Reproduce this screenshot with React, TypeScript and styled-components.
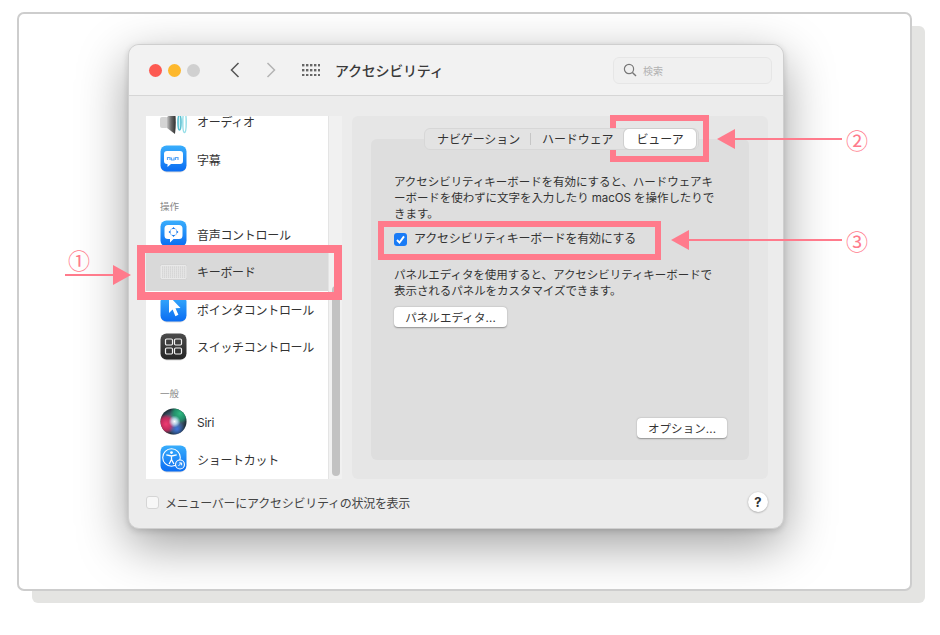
import React from "react";
import styled, { createGlobalStyle } from "styled-components";

const PINK = "#ff7b8c";
const FONT = `Inter, "Noto Sans CJK JP", sans-serif`;

const Global = createGlobalStyle`
  html, body { margin: 0; padding: 0; background: #fff; }
  body { font-family: ${FONT}; color: #333; }
  * { box-sizing: border-box; }
`;

const Page = styled.div`
  position: relative;
  width: 940px;
  height: 635px;
  overflow: hidden;
  padding: 12px 0 0 17px;
`;
const Card = styled.div`
  width: 895px;
  height: 579px;
  background: #fff;
  border: 2px solid #cdcdcd;
  border-radius: 7px;
  box-shadow: 14px 13px 0 -1px #e4e4e2;
  padding: 30px 0 0 109px;
  overflow: hidden;
`;
const Window = styled.div`
  width: 656px;
  height: 485px;
  display: flex;
  flex-direction: column;
  border-radius: 11px;
  background: #ececec;
  border: 1px solid #cfcfcf;
  box-shadow: 0 16px 50px rgba(0, 0, 0, 0.38), 0 2px 6px rgba(0, 0, 0, 0.14);
  overflow: hidden;
`;
const TitleBar = styled.div`
  height: 51px;
  flex: none;
  display: flex;
  align-items: center;
  background: #f2f2f2;
  border-bottom: 1px solid #d6d6d6;
  padding: 0 11px 0 20px;
`;
const Light = styled.span<{ $c: string; $ml?: number }>`
  width: 13px;
  height: 13px;
  border-radius: 50%;
  background: ${(p) => p.$c};
  margin-left: ${(p) => p.$ml ?? 0}px;
  flex: none;
`;
const NavIcon = styled.svg<{ $ml: number }>`
  margin-left: ${(p) => p.$ml}px;
  flex: none;
`;
const Title = styled.div`
  margin-left: 15px;
  font-size: 14px;
  font-weight: 500;
  letter-spacing: -0.25px;
  color: #3a3a3a;
  white-space: nowrap;
`;
const Search = styled.div`
  margin-left: auto;
  width: 159px;
  height: 27px;
  display: flex;
  align-items: center;
  gap: 6px;
  padding-left: 9px;
  border: 1px solid #e6e6e6;
  border-radius: 6px;
  background: #f0f0f0;
  font-size: 10px;
  color: #b2b2b2;
`;
const Body = styled.div`
  flex: 1;
  display: flex;
  flex-direction: column;
  padding: 20px 15px 0 17px;
`;
const Columns = styled.div`
  display: flex;
  height: 363px;
  gap: 10px;
`;
const Sidebar = styled.div`
  width: 196px;
  flex: none;
  display: flex;
  background: #f1f1f1;
`;
const List = styled.div`
  width: 183px;
  flex: none;
  background: #fff;
  border-right: 1px solid #e4e4e4;
  overflow: hidden;
`;
const ListInner = styled.div`
  margin-top: -13px;
`;
const Track = styled.div`
  flex: 1;
  display: flex;
  flex-direction: column;
  justify-content: flex-end;
  padding: 0 2px 3px 3px;
`;
const Thumb = styled.div`
  height: 190px;
  border-radius: 4px;
  background: #c2c2c2;
`;
const Row = styled.div<{ $selected?: boolean }>`
  height: 37.4px;
  display: flex;
  align-items: center;
  gap: 10px;
  padding-left: 14px;
  font-size: 12px;
  letter-spacing: -0.3px;
  color: #333;
  background: ${(p) => (p.$selected ? "#d9d9d9" : "transparent")};
  white-space: nowrap;
`;
const GroupLabel = styled.div`
  height: 38px;
  display: flex;
  align-items: flex-end;
  padding: 0 0 3px 14px;
  font-size: 9.5px;
  color: #888;
`;
const AppIcon = styled.svg`
  width: 27px;
  height: 28px;
  flex: none;
  display: block;
`;
const Panel = styled.div`
  flex: 1;
  display: flex;
  flex-direction: column;
  background: #e6e6e6;
  border-radius: 6px;
  padding: 12px 19px 19px;
`;
const Segments = styled.div`
  position: relative;
  z-index: 1;
  align-self: flex-end;
  margin-right: 50px;
  width: 275px;
  height: 22px;
  display: flex;
  align-items: center;
  padding-left: 12px;
  background: #e3e3e3;
  border: 1px solid #d7d7d7;
  border-radius: 6px;
  font-size: 12px;
  color: #333;
  white-space: nowrap;
`;
const Seg = styled.span`
  margin-top: -2px;
  letter-spacing: -0.1px;
`;
const SegDivider = styled.span`
  width: 1px;
  height: 12px;
  background: #c6c6c6;
  margin: 0 11px 0 10px;
`;
const SegActive = styled.span`
  margin-left: auto;
  margin-right: 2px;
  width: 72px;
  height: 20px;
  padding-bottom: 2px;
  display: flex;
  align-items: center;
  justify-content: center;
  background: #fff;
  border-radius: 5px;
  box-shadow: 0 0 0 1px #cfcfcf;
  letter-spacing: -0.1px;
`;
const Inner = styled.div`
  flex: 1;
  margin-top: -11px;
  display: flex;
  flex-direction: column;
  align-items: flex-start;
  background: #dedede;
  border-radius: 6px;
  padding: 35px 22px 22px 23px;
  font-size: 11.5px;
  line-height: 16px;
  color: #333;
`;
const Para = styled.p<{ $mt?: number }>`
  margin: ${(p) => p.$mt ?? 0}px 0 0;
  white-space: nowrap;
  letter-spacing: -0.05px;
`;
const CheckRow = styled.label`
  margin-top: 9px;
  display: flex;
  align-items: center;
  gap: 7px;
  font-size: 12px;
  letter-spacing: -0.25px;
  white-space: nowrap;
`;
const Check = styled.span<{ $on?: boolean }>`
  width: 13px;
  height: 13px;
  flex: none;
  display: flex;
  align-items: center;
  justify-content: center;
  border-radius: 3px;
  background: ${(p) => (p.$on ? "#1a7bf6" : "#f7f7f7")};
  border: ${(p) => (p.$on ? "none" : "1px solid #d5d5d5")};
`;
const Btn = styled.button<{ $w: number; $mt?: number; $auto?: boolean }>`
  width: ${(p) => p.$w}px;
  height: 20px;
  margin-top: ${(p) => (p.$auto ? "auto" : `${p.$mt ?? 0}px`)};
  align-self: ${(p) => (p.$auto ? "flex-end" : "flex-start")};
  padding: 0;
  border: none;
  border-radius: 4px;
  background: #fff;
  box-shadow: 0 0.5px 1.5px rgba(0, 0, 0, 0.35);
  font-family: ${FONT};
  font-size: 11.5px;
  letter-spacing: 0.1px;
  color: #333;
  white-space: nowrap;
`;
const Footer = styled.div`
  flex: 1;
  display: flex;
  align-items: center;
  gap: 6px;
  padding-bottom: 3px;
  font-size: 12px;
  letter-spacing: -0.26px;
  color: #444;
  white-space: nowrap;
`;
const Help = styled.button`
  margin-left: auto;
  width: 20px;
  height: 20px;
  padding: 0;
  border: none;
  border-radius: 50%;
  background: #fff;
  box-shadow: 0 0.5px 2px rgba(0, 0, 0, 0.35);
  font-family: ${FONT};
  font-size: 13px;
  font-weight: 700;
  color: #333;
`;
const Frame = styled.div<{ $x: number; $y: number; $w: number; $h: number; $b: number }>`
  position: absolute;
  left: ${(p) => p.$x}px;
  top: ${(p) => p.$y}px;
  width: ${(p) => p.$w}px;
  height: ${(p) => p.$h}px;
  border: ${(p) => p.$b}px solid ${PINK};
`;
const Overlay = styled.svg`
  position: absolute;
  left: 0;
  top: 0;
`;
const Num = styled.span<{ $x: number; $y: number }>`
  position: absolute;
  left: ${(p) => p.$x}px;
  top: ${(p) => p.$y}px;
  width: 24px;
  text-align: center;
  font-family: "Noto Sans CJK JP", sans-serif;
  font-size: 22px;
  line-height: 24px;
  font-weight: 400;
  color: ${PINK};
`;

const Defs = () => (
  <svg width="0" height="0" style={{ position: "absolute" }}>
    <defs>
      <linearGradient id="blue" x1="0" y1="0" x2="0" y2="1">
        <stop offset="0" stopColor="#39aefc" />
        <stop offset="1" stopColor="#0a6cf2" />
      </linearGradient>
      <linearGradient id="dark" x1="0" y1="0" x2="0" y2="1">
        <stop offset="0" stopColor="#4c4c4c" />
        <stop offset="1" stopColor="#252525" />
      </linearGradient>
      <linearGradient id="cone" x1="0" y1="0" x2="1" y2="0">
        <stop offset="0" stopColor="#c4c4c4" />
        <stop offset="0.45" stopColor="#6e6e6e" />
        <stop offset="1" stopColor="#2e2e2e" />
      </linearGradient>
      <radialGradient id="siriBase" cx="0.5" cy="0.5" r="0.5">
        <stop offset="0" stopColor="#7c95a6" />
        <stop offset="0.75" stopColor="#34495a" />
        <stop offset="1" stopColor="#1a2a33" />
      </radialGradient>
      <radialGradient id="siriRed" cx="0.5" cy="0.5" r="0.5">
        <stop offset="0" stopColor="#ee3c72" />
        <stop offset="0.6" stopColor="#d8265e" stopOpacity="0.85" />
        <stop offset="1" stopColor="#d8265e" stopOpacity="0" />
      </radialGradient>
      <radialGradient id="siriGreen" cx="0.5" cy="0.5" r="0.5">
        <stop offset="0" stopColor="#2fbb82" />
        <stop offset="0.6" stopColor="#1f9a6c" stopOpacity="0.85" />
        <stop offset="1" stopColor="#1f9a6c" stopOpacity="0" />
      </radialGradient>
      <radialGradient id="siriBlue" cx="0.5" cy="0.5" r="0.5">
        <stop offset="0" stopColor="#3f78ea" stopOpacity="0.9" />
        <stop offset="1" stopColor="#3f78ea" stopOpacity="0" />
      </radialGradient>
      <radialGradient id="siriWhite" cx="0.5" cy="0.5" r="0.5">
        <stop offset="0" stopColor="#ffffff" />
        <stop offset="0.5" stopColor="#cfeeff" stopOpacity="0.7" />
        <stop offset="1" stopColor="#bfe6ff" stopOpacity="0" />
      </radialGradient>
    </defs>
  </svg>
);

const Squircle = ({ fill = "url(#blue)" }: { fill?: string }) => (
  <>
    <rect x="1" y="1.5" width="25" height="26" rx="6" fill="#000" opacity="0.14" />
    <rect x="0.5" y="0.5" width="26" height="26" rx="6" fill={fill} />
  </>
);

const AudioIcon = () => (
  <AppIcon viewBox="0 0 27 28">
    <rect x="0" y="9" width="8" height="11" rx="2" fill="#d4d4d4" />
    <path d="M7 9 L15 3 Q16.5 14.5 15 26 L7 20 Z" fill="url(#cone)" />
    <ellipse cx="19.5" cy="14.5" rx="1.5" ry="7.5" stroke="#58bfd0" strokeWidth="1.6" fill="#d6f2f6" />
    <ellipse cx="24.5" cy="14.5" rx="1.7" ry="10" stroke="#98dfe8" strokeWidth="1.5" fill="none" />
  </AppIcon>
);
const CaptionIcon = () => (
  <AppIcon viewBox="0 0 27 28">
    <Squircle />
    <path d="M7 6 H20 a3 3 0 0 1 3 3 V16 a3 3 0 0 1 -3 3 H11 L7.5 22 V19 H7 a3 3 0 0 1 -3 -3 V9 a3 3 0 0 1 3 -3 Z" fill="#fff" />
    <path d="M7.5 15 V12.5 H10 V15 M11.5 12.5 V15 H14 V12.5 M15.5 15 V12.5 H18 V15" stroke="#5aa6f6" strokeWidth="1.2" fill="none" />
  </AppIcon>
);
const VoiceIcon = () => (
  <AppIcon viewBox="0 0 27 28">
    <Squircle />
    <path d="M8 5 H19 a3.5 3.5 0 0 1 3.5 3.5 V15.5 a3.5 3.5 0 0 1 -3.5 3.5 H13.5 L10 22.5 V19 H8 a3.5 3.5 0 0 1 -3.5 -3.5 V8.5 a3.5 3.5 0 0 1 3.5 -3.5 Z" fill="#fff" />
    <circle cx="13.5" cy="12" r="3.6" stroke="#8fc0f6" strokeWidth="0.8" fill="none" />
    <path d="M13.5 7 l1.6 1.9 h-3.2 Z M13.5 17 l1.6 -1.9 h-3.2 Z M8.5 12 l1.9 -1.6 v3.2 Z M18.5 12 l-1.9 -1.6 v3.2 Z" fill="#1277ee" />
  </AppIcon>
);
const KeyboardIcon = () => (
  <AppIcon viewBox="0 0 27 28">
    <rect x="0" y="6.5" width="27" height="15" rx="2" fill="#e9e9e9" stroke="#cdcdcd" strokeWidth="0.7" />
    {[9, 11, 13, 15, 17, 19].map((y) =>
      Array.from({ length: 12 }).map((_, i) => (
        <rect key={`${y}-${i}`} x={2 + i * 2} y={y - 0.5} width="1.3" height="1.1" fill="#cbcbcb" />
      ))
    )}
  </AppIcon>
);
const PointerIcon = () => (
  <AppIcon viewBox="0 0 27 28">
    <Squircle />
    <path d="M9 1 L20.5 13 L15.5 13.2 L18.4 19.8 L15.4 21.2 L12.6 14.6 L9 18 Z" fill="#fff" />
  </AppIcon>
);
const SwitchIcon = () => (
  <AppIcon viewBox="0 0 27 28">
    <Squircle fill="url(#dark)" />
    {[
      [5.5, 6],
      [14.5, 6],
      [5.5, 15],
      [14.5, 15],
    ].map(([x, y]) => (
      <rect key={`${x}-${y}`} x={x} y={y} width="7" height="6" rx="1.2" stroke="#f2f2f2" strokeWidth="1.2" fill="none" />
    ))}
  </AppIcon>
);
const SiriIcon = () => (
  <AppIcon viewBox="0 0 27 28">
    <circle cx="13.5" cy="14" r="13" fill="#000" opacity="0.12" />
    <circle cx="13.5" cy="13.5" r="13" fill="url(#siriBase)" />
    <clipPath id="siriClip">
      <circle cx="13.5" cy="13.5" r="13" />
    </clipPath>
    <g clipPath="url(#siriClip)">
      <circle cx="6" cy="16" r="10" fill="url(#siriRed)" />
      <circle cx="20" cy="5.5" r="10" fill="url(#siriGreen)" />
      <circle cx="17" cy="21" r="8" fill="url(#siriBlue)" />
      <circle cx="14.5" cy="13.5" r="6" fill="url(#siriWhite)" />
    </g>
  </AppIcon>
);
const ShortcutIcon = () => (
  <AppIcon viewBox="0 0 27 28">
    <Squircle />
    <circle cx="11.5" cy="12.5" r="8.8" stroke="#fff" strokeWidth="1.1" fill="none" />
    <circle cx="11.5" cy="7.6" r="1.4" fill="#fff" />
    <path d="M6.3 9.8 L11.5 11 L16.7 9.8 M11.5 11 V14.5 M11.5 14.5 L9.1 19 M11.5 14.5 L13.9 19" stroke="#fff" strokeWidth="1.3" fill="none" />
    <circle cx="20" cy="19.5" r="5" fill="#fff" />
    <circle cx="20" cy="19.5" r="3.9" fill="#2b8cf5" />
    <path d="M18.4 21 L21.4 18 M19.2 17.9 H21.6 V20.3" stroke="#fff" strokeWidth="1" fill="none" />
  </AppIcon>
);

export default function App() {
  return (
    <>
      <Global />
      <Defs />
      <Page>
        <Card>
          <Window>
            <TitleBar>
              <Light $c="#fd5a52" />
              <Light $c="#fdb82d" $ml={6} />
              <Light $c="#d0d0d0" $ml={6} />
              <NavIcon $ml={29} width="12" height="18" viewBox="0 0 12 18">
                <path d="M9.5 2 L2.5 9 L9.5 16" stroke="#555" strokeWidth="1.5" fill="none" />
              </NavIcon>
              <NavIcon $ml={24} width="12" height="18" viewBox="0 0 12 18">
                <path d="M2.5 2 L9.5 9 L2.5 16" stroke="#b4b4b4" strokeWidth="1.5" fill="none" />
              </NavIcon>
              <NavIcon $ml={25} width="18" height="12" viewBox="0 0 18 12">
                {[0, 5, 10].map((y) =>
                  [0, 4, 8, 12, 16].map((x) => (
                    <rect key={`${x}-${y}`} x={x} y={y} width="2.4" height="2.4" fill="#666" />
                  ))
                )}
              </NavIcon>
              <Title>アクセシビリティ</Title>
              <Search>
                <svg width="14" height="14" viewBox="0 0 14 14">
                  <circle cx="6" cy="6" r="4.6" stroke="#777" strokeWidth="1.2" fill="none" />
                  <path d="M9.4 9.4 L13 13" stroke="#777" strokeWidth="1.4" />
                </svg>
                検索
              </Search>
            </TitleBar>
            <Body>
              <Columns>
                <Sidebar>
                  <List>
                    <ListInner>
                      <Row><AudioIcon />オーディオ</Row>
                      <Row><CaptionIcon />字幕</Row>
                      <GroupLabel>操作</GroupLabel>
                      <Row><VoiceIcon />音声コントロール</Row>
                      <Row $selected><KeyboardIcon />キーボード</Row>
                      <Row><PointerIcon />ポインタコントロール</Row>
                      <Row><SwitchIcon />スイッチコントロール</Row>
                      <GroupLabel>一般</GroupLabel>
                      <Row><SiriIcon />Siri</Row>
                      <Row><ShortcutIcon />ショートカット</Row>
                    </ListInner>
                  </List>
                  <Track><Thumb /></Track>
                </Sidebar>
                <Panel>
                  <Segments>
                    <Seg>ナビゲーション</Seg>
                    <SegDivider />
                    <Seg>ハードウェア</Seg>
                    <SegActive>ビューア</SegActive>
                  </Segments>
                  <Inner>
                    <Para>
                      アクセシビリティキーボードを有効にすると、ハードウェアキ<br />
                      ーボードを使わずに文字を入力したり macOS を操作したりで<br />
                      きます。
                    </Para>
                    <CheckRow>
                      <Check $on>
                        <svg width="11" height="11" viewBox="0 0 11 11">
                          <path d="M2 6 L4.5 8.6 L9 2.4" stroke="#fff" strokeWidth="1.9" fill="none" />
                        </svg>
                      </Check>
                      アクセシビリティキーボードを有効にする
                    </CheckRow>
                    <Para $mt={20}>
                      パネルエディタを使用すると、アクセシビリティキーボードで<br />
                      表示されるパネルをカスタマイズできます。
                    </Para>
                    <Btn $w={113} $mt={8}>パネルエディタ...</Btn>
                    <Btn $w={90} $auto>オプション...</Btn>
                  </Inner>
                </Panel>
              </Columns>
              <Footer>
                <Check />
                メニューバーにアクセシビリティの状況を表示
                <Help>?</Help>
              </Footer>
            </Body>
          </Window>
        </Card>

        <Frame $x={137} $y={245} $w={205} $h={55} $b={8} />
        <Frame $x={610} $y={115} $w={99} $h={47} $b={6} />
        <Frame $x={378} $y={221} $w={283} $h={39} $b={6} />
        <Overlay width="940" height="635" viewBox="0 0 940 635">
          <g fill={PINK}>
            <path d="M65 274 H115 V276 H65 Z" />
            <polygon points="131,275 113,265 113,285" />
            <path d="M733 138 H842 V140 H733 Z" />
            <polygon points="717,139 735,129 735,149" />
            <path d="M687 239 H842 V241 H687 Z" />
            <polygon points="671,240 689,230 689,250" />
          </g>
        </Overlay>
        <Num $x={67} $y={247}>①</Num>
        <Num $x={845} $y={127}>②</Num>
        <Num $x={845} $y={228}>③</Num>
      </Page>
    </>
  );
}
